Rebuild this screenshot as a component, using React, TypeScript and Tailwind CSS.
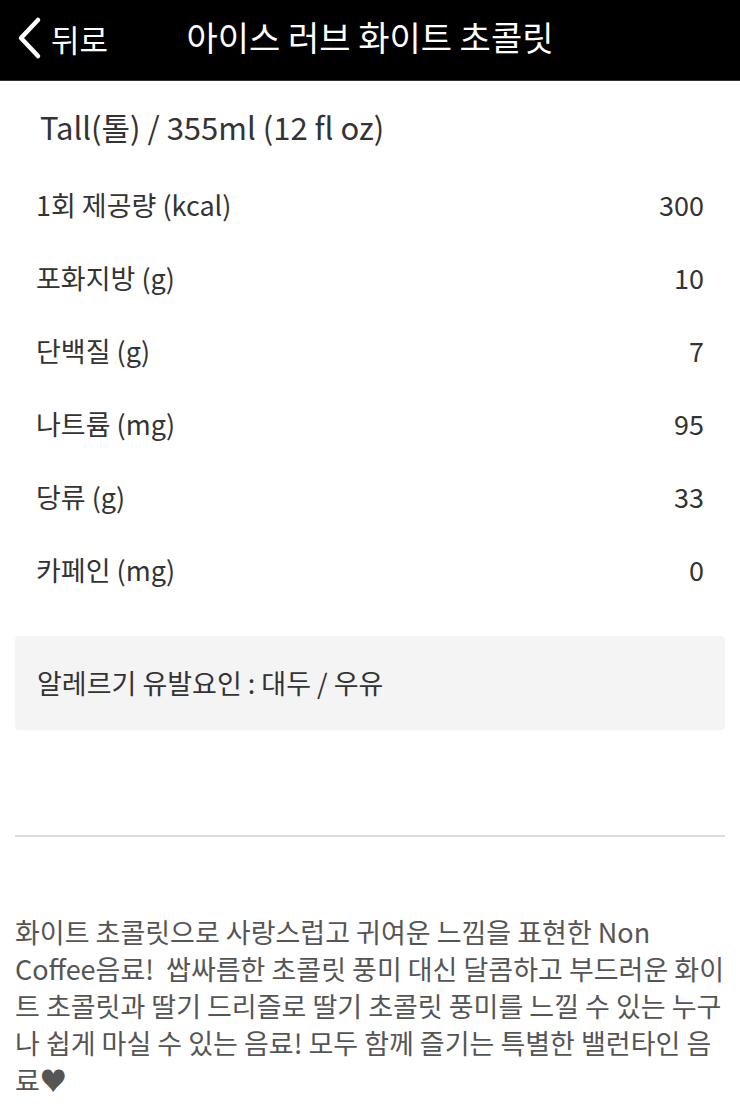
import React from "react"

const nutrition = [
  { label: "1회 제공량 (kcal)", value: "300" },
  { label: "포화지방 (g)", value: "10" },
  { label: "단백질 (g)", value: "7" },
  { label: "나트륨 (mg)", value: "95" },
  { label: "당류 (g)", value: "33" },
  { label: "카페인 (mg)", value: "0" },
]

function BackChevron() {
  return (
    <svg width="28" height="44" viewBox="0 0 28 44" fill="none" aria-hidden>
      <path d="M23 4 L6 22 L23 40" stroke="white" strokeWidth="4.5" strokeLinecap="round" strokeLinejoin="round" />
    </svg>
  )
}

export default function App() {
  return (
    <div className="min-h-[1114px] bg-white font-['Noto_Sans_CJK_KR','Noto_Sans',sans-serif]">
      <header className="relative flex h-[81px] items-center border-b border-[#333] bg-black text-white">
        <button className="ml-[15px] flex items-center gap-[8px] pb-[4px]">
          <BackChevron />
          <span className="text-[31px] leading-none">뒤로</span>
        </button>
        <h1 className="absolute inset-x-0 top-0 flex h-[80px] items-center justify-center pb-[6px] text-[34px] font-normal leading-none">
          아이스 러브 화이트 초콜릿
        </h1>
      </header>

      <section className="px-[36px]">
        <p className="mt-[24px] pl-[4px] text-[31px] leading-[44px] text-[#333]">Tall(톨) / 355ml (12 fl oz)</p>
        <ul className="mt-[20px]">
          {nutrition.map((row) => (
            <li key={row.label} className="flex h-[73px] items-center justify-between text-[27px] text-[#333]">
              <span>{row.label}</span>
              <span>{row.value}</span>
            </li>
          ))}
        </ul>
      </section>

      <div className="mx-[15px] mt-[29px] flex h-[94px] items-center rounded-[4px] bg-[#f5f4f4] px-[22px] text-[27px] text-[#333]">
        알레르기 유발요인 : 대두 / 우유
      </div>

      <hr className="mx-[15px] mt-[105px] border-t-2 border-[#dcdcdc]" />

      <p className="mx-[15px] mt-[76px] text-[27px] leading-[37px] text-[#555]">
        화이트 초콜릿으로 사랑스럽고 귀여운 느낌을 표현한 Non Coffee음료!&nbsp; 쌉싸름한 초콜릿 풍미 대신 달콤하고 부드러운 화이트 초콜릿과 딸기 드리즐로 딸기 초콜릿 풍미를 느낄 수 있는 누구나 쉽게 마실 수 있는 음료! 모두 함께 즐기는 특별한 밸런타인 음료♥
      </p>
    </div>
  )
}
